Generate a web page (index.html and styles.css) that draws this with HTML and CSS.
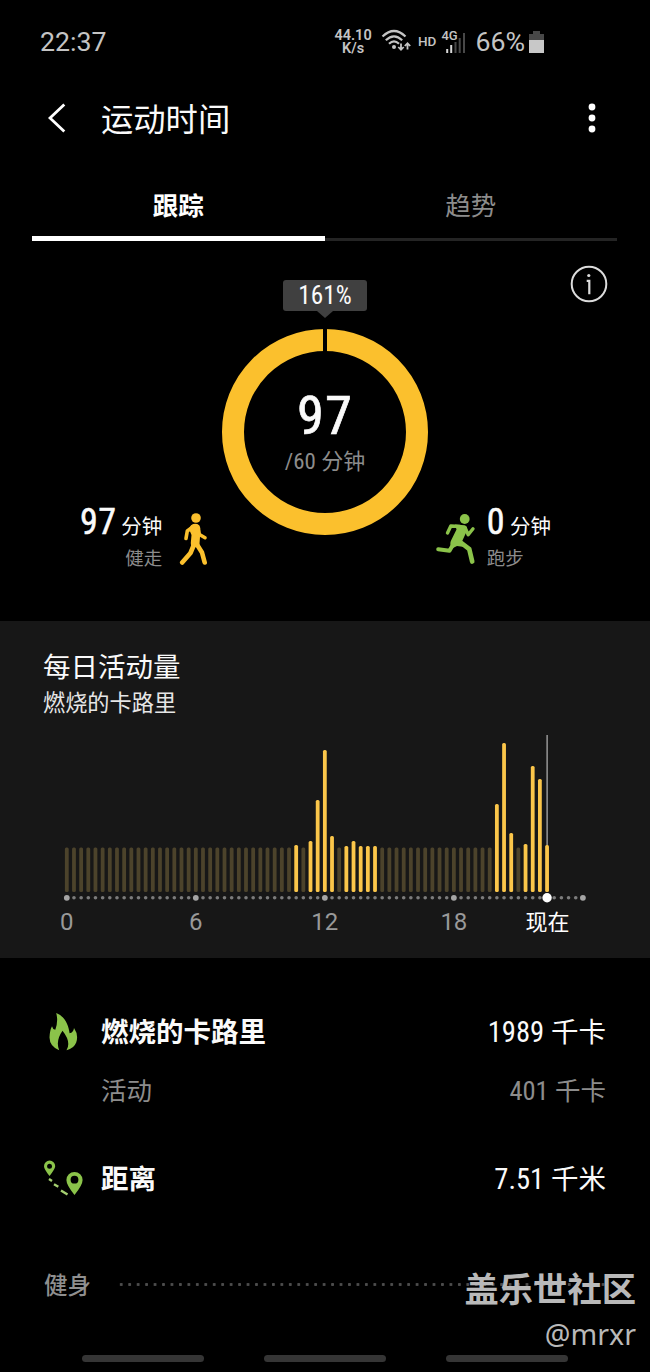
FILE: index.html
```
<!DOCTYPE html>
<html lang="zh-CN">
<head>
    <meta charset="UTF-8">
    <meta name="viewport" content="width=device-width, initial-scale=1.0">
    <title>运动时间</title>
    <link rel="stylesheet" href="styles.css">
</head>
<body>
    <div class="status-bar">
        <span class="clock">22:37</span>
        <div class="status-icons">
            <div class="net-speed">44.10<br>K/s</div>
            <svg class="wifi" width="30" height="26" viewBox="0 0 30 26">
                <g fill="none" stroke="#c4c4c4" stroke-width="2.2">
                    <path d="M1.5 7.5Q13 -3.5 24.5 7.5"/>
                    <path d="M4.8 11.2Q13 3.4 21.2 11.2"/>
                    <path d="M8 14.8Q13 10 18 14.8"/>
                </g>
                <circle cx="13" cy="18" r="2" fill="#c4c4c4"/>
                <path d="M20 14.5v6M17.3 18l2.7 2.8 2.7-2.8M26.5 20.5v-6M23.8 17l2.7-2.8 2.7 2.8" fill="none" stroke="#c4c4c4" stroke-width="1.8"/>
            </svg>
            <span class="hd">HD</span>
            <div class="signal">
                <span class="signal-type">4G</span>
                <svg width="20" height="20" viewBox="0 0 20 20">
                    <path d="M1.2 20v-4M5.2 20v-8" stroke="#d8d8d8" stroke-width="2"/>
                    <path d="M9.5 20V9M13.7 20V5M18 20V0" stroke="#484848" stroke-width="2"/>
                </svg>
            </div>
            <span class="battery-text">66%</span>
            <svg class="battery" width="15" height="22" viewBox="0 0 15 22">
                <path d="M4 0h7v3h4v7H0V3h4z" fill="#484848"/>
                <path d="M0 9h15v13H0z" fill="#c8c8c8"/>
            </svg>
        </div>
    </div>

    <div class="header">
        <svg class="back" width="18" height="30" viewBox="0 0 18 30"><path d="M16.3 1.5L2 15l14.3 13.5" fill="none" stroke="#fff" stroke-width="2.8"/></svg>
        <h1>运动时间</h1>
        <svg class="more" width="8" height="30" viewBox="0 0 8 30" fill="#fff">
            <circle cx="4" cy="4" r="3.4"/><circle cx="4" cy="15" r="3.4"/><circle cx="4" cy="26" r="3.4"/>
        </svg>
    </div>

    <div class="tabs">
        <div class="tab active">跟踪</div>
        <div class="tab">趋势</div>
    </div>

    <div class="tracker">
        <svg class="info" width="38" height="38" viewBox="0 0 38 38">
            <circle cx="19" cy="19" r="17.3" fill="none" stroke="#dcdcdc" stroke-width="2"/>
            <circle cx="18.8" cy="10.5" r="1.6" fill="#dcdcdc"/>
            <path d="M16.7 15.8h2.6v13.4" fill="none" stroke="#dcdcdc" stroke-width="2.2"/>
        </svg>
        <div class="bubble"><span class="num">161%</span></div>
        <div class="ring">
            <div class="ring-value">97</div>
            <div class="ring-goal"><span class="num">/60</span> 分钟</div>
        </div>
        <div class="activities">
            <div class="activity walk">
                <div class="activity-text">
                    <div class="amount"><span class="big">97</span>分钟</div>
                    <div class="name">健走</div>
                </div>
                <svg width="28" height="54" viewBox="0 0 28 54">
                    <circle cx="17" cy="6" r="4.8" fill="#fbc02d"/>
                    <g fill="none" stroke="#fbc02d" stroke-linecap="round" stroke-linejoin="round">
                        <path d="M14.3 14.5L8.3 19 7 26.5" stroke-width="3.6"/>
                        <path d="M18.5 15L20.5 22.5 26 25.8" stroke-width="3.4"/>
                        <path d="M14.8 33L11.5 41 3.2 50.5" stroke-width="4.6"/>
                        <path d="M17 31L23 40.5 25.7 50.5" stroke-width="4.6"/>
                    </g>
                    <path d="M12 13.2Q16.5 10.5 20.2 13.2Q22 15.5 21.2 22L20.3 34.5L12.3 36L11.8 31L12.5 23L10 17Z" fill="#fbc02d"/>
                </svg>
            </div>
            <div class="activity run">
                <svg width="42" height="54" viewBox="0 0 42 54">
                    <circle cx="29.7" cy="7" r="4.9" fill="#8bc34a"/>
                    <g fill="none" stroke="#8bc34a" stroke-linecap="round" stroke-linejoin="round">
                        <path d="M25 14.5L15.8 14 12.5 21" stroke-width="3.4"/>
                        <path d="M30 15.5L33.2 22.8 38 16.8" stroke-width="3.4"/>
                        <path d="M19 31L14.5 38.8 3.2 37.2" stroke-width="4"/>
                        <path d="M24.5 29.5L34.3 37.2 37.2 49.5" stroke-width="4.7"/>
                    </g>
                    <path d="M20 12.5L29.5 13.2Q33.4 15 31.6 19.5L27 29.5L29.5 35L22 34L17 36.5Q14 32 16.3 28L21.5 17.5Z" fill="#8bc34a"/>
                </svg>
                <div class="activity-text">
                    <div class="amount"><span class="big">0</span>分钟</div>
                    <div class="name">跑步</div>
                </div>
            </div>
        </div>
    </div>

    <div class="daily">
        <h2>每日活动量</h2>
        <p>燃烧的卡路里</p>
        <svg id="chart" width="562" height="210" viewBox="0 0 562 210"></svg>
    </div>

    <div class="stats">
        <div class="stat">
            <svg class="stat-icon" width="40" height="40" viewBox="0 0 40 40">
                <path d="M12.2 1C20 4 24.5 12 25.6 21.3Q29.5 20.5 30 16Q34.8 23 32.2 30.5Q30 36.5 22.5 38.2Q27.5 30 18.5 18.8Q11.3 29 15.2 38.2Q5.7 34.5 5.5 25.5Q5.7 18.5 8 14.2Q8.5 17 11.3 17.8Q14.5 9 12.2 1Z" fill="#8bc34a"/>
            </svg>
            <span class="label">燃烧的卡路里</span>
            <span class="value"><span class="num">1989</span> 千卡</span>
        </div>
        <div class="stat sub">
            <span class="label">活动</span>
            <span class="value"><span class="num">401</span> 千卡</span>
        </div>
        <div class="stat">
            <svg class="stat-icon" width="40" height="40" viewBox="0 0 40 40">
                <g fill="#8bc34a" fill-rule="evenodd">
                    <path d="M5.5 17Q0 10 0 7.2A5.6 5.6 0 0 1 11.2 7.2Q11 10 5.5 17ZM5.6 4.7a2.5 2.5 0 1 0 0 5 2.5 2.5 0 1 0 0-5Z"/>
                    <path d="M30.5 36Q22.4 26 22.4 21A8.1 8.1 0 0 1 38.6 21Q38.6 26 30.5 36ZM30.5 16.8a3.9 3.9 0 1 0 0 7.8 3.9 3.9 0 1 0 0-7.8Z"/>
                </g>
                <path d="M5 20l3 2M10 25.2l4.3 2.6M17 31.5l6.5 4" stroke="#a5cf70" stroke-width="2.4"/>
            </svg>
            <span class="label">距离</span>
            <span class="value"><span class="num">7.51</span> 千米</span>
        </div>
    </div>

    <div class="fitness">
        <span>健身</span>
        <div class="dots"></div>
    </div>

    <div class="nav-bar"><i></i><i></i><i></i></div>

    <div class="watermark">
        <div class="site">盖乐世社区</div>
        <div class="user">@mrxr</div>
    </div>

    <script>
        const chart = document.getElementById('chart');
        const startX = 22.8;
        const step = 7.168;
        const now = 67;
        const baseline = 160;
        // slot (20 minutes each) -> bar height
        const active = {
            32: 47, 34: 51, 35: 92, 36: 142, 37: 56, 39: 46, 40: 51, 41: 46, 42: 46, 43: 46,
            60: 88, 61: 149, 62: 59, 64: 48, 65: 126, 66: 113, 67: 47
        };

        let svg = `<rect x="${startX + now * step - 0.6}" y="3" width="1.3" height="112" fill="#aaa"/>`;
        for (let i = 0; i <= now; i++) {
            const h = active[i] || 44.5;
            const cls = active[i] ? 'bar filled' : 'bar';
            svg += `<rect class="${cls}" x="${(startX + i * step - 1.9).toFixed(2)}" y="${baseline - h}" width="3.8" height="${h}" rx="1.5"/>`;
        }
        for (let i = 0; i <= 72; i++) {
            const major = i % 18 === 0;
            svg += `<circle cx="${(startX + i * step).toFixed(2)}" cy="165.8" r="${major ? 2.9 : 1.8}" fill="${major ? '#a5a5a5' : '#7c7c7c'}"/>`;
        }
        svg += `<circle cx="${startX + now * step}" cy="165.8" r="4.7" fill="#fff"/>`;
        [0, 6, 12, 18].forEach(hour => {
            svg += `<text class="hour" x="${startX + hour * 3 * step}" y="198">${hour}</text>`;
        });
        svg += `<text class="hour now" x="${startX + now * step + 0.5}" y="197.5">现在</text>`;
        chart.innerHTML = svg;
    </script>
</body>
</html>
```
FILE: styles.css
```
* {
    box-sizing: border-box;
}

body {
    margin: 0;
    width: 650px;
    height: 1372px;
    position: relative;
    display: flex;
    flex-direction: column;
    overflow: hidden;
    background: #000;
    color: #fafafa;
    font-family: Roboto, "Noto Sans CJK SC", sans-serif;
}

svg {
    display: block;
    flex: none;
}

h1, h2, p {
    margin: 0;
    font-weight: 400;
}

.num {
    font-family: "Roboto Condensed", Roboto, sans-serif;
    font-size: 1.04em;
    font-stretch: 77%;
}

.status-bar {
    height: 84px;
    padding: 0 106px 0 40px;
    display: flex;
    align-items: center;
    justify-content: space-between;
    color: #c4c4c4;
}

.clock {
    font-size: 26.7px;
}

.status-icons {
    display: flex;
    align-items: center;
}

.net-speed {
    width: 38px;
    text-align: center;
    font-size: 14.5px;
    font-weight: 600;
    line-height: 13px;
}

.wifi {
    margin-left: 9px;
}

.hd {
    margin: 0 0 2px 7px;
    font-size: 13.5px;
    font-weight: 500;
}

.signal {
    width: 25px;
    height: 24px;
    margin: 0 0 2px 5px;
    position: relative;
    display: flex;
    align-items: flex-end;
    justify-content: flex-end;
}

.signal-type {
    position: absolute;
    left: 0;
    top: 0;
    font-size: 13px;
    font-weight: 500;
    line-height: 14px;
}

.battery-text {
    margin-left: 9px;
    font-size: 26.7px;
}

.battery {
    margin-left: 4px;
}

.header {
    height: 72px;
    padding: 0 54px 0 48px;
    display: flex;
    align-items: center;
}

.header svg {
    margin-bottom: 4px;
}

.header h1 {
    flex: 1;
    margin-left: 35px;
    font-size: 32.3px;
    line-height: 40px;
}

.tabs {
    height: 85px;
    margin: 0 33px 0 32px;
    display: flex;
    align-items: flex-end;
}

.tab {
    flex: 1;
    height: 58px;
    padding-top: 3px;
    border-bottom: 3px solid #242424;
    text-align: center;
    font-size: 25.5px;
    line-height: 40px;
    color: #8c8c8c;
}

.tab.active {
    border-bottom: 5px solid #fff;
    color: #fff;
    font-weight: 700;
}

.tracker {
    height: 380px;
    position: relative;
    display: flex;
    flex-direction: column;
    align-items: center;
    padding-top: 39px;
}

.info {
    position: absolute;
    top: 24px;
    right: 42px;
}

.bubble {
    width: 84px;
    height: 31px;
    position: relative;
    border-radius: 3px;
    background: #404040;
    text-align: center;
    font-size: 24.3px;
    line-height: 31px;
}

.bubble::after {
    content: "";
    position: absolute;
    top: 31px;
    left: 34px;
    border: 8px solid transparent;
    border-top: 7px solid #404040;
    border-bottom: 0;
}

.ring {
    width: 206px;
    height: 206px;
    margin-top: 18px;
    position: relative;
    border: 22px solid #fbc02d;
    border-radius: 50%;
    text-align: center;
}

/* start mark at the top of the ring */
.ring::before {
    content: "";
    position: absolute;
    top: -23px;
    left: 79px;
    width: 4px;
    height: 24px;
    background: #000;
}

.ring-value {
    margin-top: 36px;
    font-size: 54.5px;
    font-stretch: 75%;
    line-height: 56px;
    letter-spacing: 1px;
    -webkit-text-stroke: 0.7px #fafafa;
}

.ring-goal {
    margin-top: 3px;
    font-size: 22px;
    line-height: 32px;
    color: #8c8c8c;
}

.activities {
    align-self: stretch;
    margin-top: -33px;
    padding: 0 99px 0 80px;
    display: flex;
    justify-content: space-between;
}

.activity {
    display: flex;
}

.activity svg {
    margin-top: 10px;
}

.walk .activity-text {
    margin-right: 17px;
    text-align: right;
}

.run .activity-text {
    margin-left: 10px;
}

.amount {
    height: 40px;
    font-size: 20.5px;
    line-height: 40px;
    white-space: nowrap;
}

.big {
    margin-right: 5px;
    font-size: 36px;
    font-stretch: 75%;
    letter-spacing: 0.4px;
    -webkit-text-stroke: 0.5px #fafafa;
}

.name {
    padding-top: 2px;
    font-size: 18.5px;
    line-height: 30px;
    color: #8c8c8c;
}

.daily {
    height: 337px;
    padding: 27px 44px 0;
    background: #171717;
}

.daily h2 {
    margin-left: -1px;
    font-size: 27.5px;
    line-height: 40px;
}

.daily p {
    margin-left: -1px;
    font-size: 22.2px;
    line-height: 30px;
    color: #e6e6e6;
}

#chart {
    margin-top: 14px;
}

.bar {
    fill: #4c432b;
}

.bar.filled {
    fill: #fbc64a;
}

.hour {
    font-size: 24px;
    text-anchor: middle;
    fill: #999;
}

.hour.now {
    font-size: 22px;
    fill: #fff;
}

.stats {
    padding: 50px 44px 0;
    display: flex;
    flex-direction: column;
}

.stat {
    height: 48px;
    display: flex;
    align-items: center;
    font-size: 27.5px;
    line-height: 48px;
}

.stat span {
    padding-top: 1px;
}

.stat .label {
    flex: 1;
    margin-left: 17px;
    font-weight: 700;
}

.stat.sub {
    margin: 10px 0 41px;
    font-size: 25.5px;
    color: #8c8c8c;
}

.stat.sub .label {
    margin-left: 57px;
    font-weight: 400;
}

.fitness {
    margin-top: 57px;
    padding-left: 44px;
    display: flex;
    align-items: center;
    font-size: 23.5px;
    font-weight: 500;
    line-height: 48px;
    color: #8f8f8f;
}

.fitness span {
    height: 48px;
    padding-top: 2px;
}

.dots {
    width: 488px;
    height: 3px;
    margin-left: 26px;
    background: radial-gradient(circle, #4c4c4c 1.3px, transparent 1.7px) 0 0 / 8.46px 3px repeat-x;
}

.nav-bar {
    margin-top: auto;
    padding: 0 82px 10px;
    display: flex;
    justify-content: space-between;
}

.nav-bar i {
    width: 122px;
    height: 7px;
    border-radius: 4px;
    background: #353535;
}

.watermark {
    position: absolute;
    right: 14px;
    top: 1266px;
    text-align: right;
    color: #b9b9b9;
}

.site {
    font-size: 34.3px;
    font-weight: 700;
    line-height: 48px;
}

.user {
    font-family: "Noto Sans", sans-serif;
    font-size: 28.6px;
    line-height: 39px;
}
```
